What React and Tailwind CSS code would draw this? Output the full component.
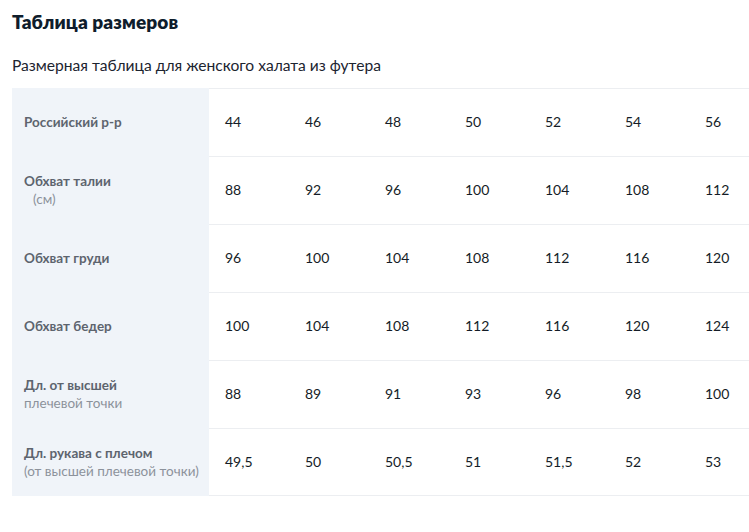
export default function App() {
  const rows = [
    { label: "Российский р-р", sub: null, values: ["44", "46", "48", "50", "52", "54", "56"] },
    { label: "Обхват талии", sub: "(см)", subIndent: true, values: ["88", "92", "96", "100", "104", "108", "112"] },
    { label: "Обхват груди", sub: null, values: ["96", "100", "104", "108", "112", "116", "120"] },
    { label: "Обхват бедер", sub: null, values: ["100", "104", "108", "112", "116", "120", "124"] },
    { label: "Дл. от высшей", sub: "плечевой точки", values: ["88", "89", "91", "93", "96", "98", "100"] },
    { label: "Дл. рукава с плечом", sub: "(от высшей плечевой точки)", values: ["49,5", "50", "50,5", "51", "51,5", "52", "53"] },
  ];
  return (
    <div className="w-[749px] h-[532px] overflow-hidden bg-white" style={{ fontFamily: "Lato, 'Noto Sans', sans-serif" }}>
      <div className="pl-3 pt-[10px]">
        <h1 className="text-[19px] leading-[24px] font-extrabold text-[#0f1d2c] tracking-[0.1px]">Таблица размеров</h1>
        <p className="mt-[21px] text-[15.6px] leading-[20px] text-[#1c2430]">Размерная таблица для женского халата из футера</p>
      </div>
      <div className="mt-[13px] ml-3 flex flex-col w-[780px]">
        {rows.map((r, i) => (
          <div key={i} className="flex h-[68px]">
            <div className="w-[197px] shrink-0 bg-[#f0f4f9] pl-3 flex flex-col justify-center">
              <div className="text-[13.5px] leading-[18px] font-bold text-[#5d646e]">{r.label}</div>
              {r.sub && (
                <div className={"text-[13.5px] leading-[19px] text-[#8c929b]" + (r.subIndent ? " pl-[9px]" : "")}>{r.sub}</div>
              )}
            </div>
            <div className={"flex flex-1 items-center pb-[2px] border-t border-[#eceef1]" + (i === rows.length - 1 ? " border-b" : "")}>
              {r.values.map((v, j) => (
                <div key={j} className="w-[80px] shrink-0 pl-[16px] text-[14px] text-[#141c26]">{v}</div>
              ))}
            </div>
          </div>
        ))}
      </div>
    </div>
  );
}
